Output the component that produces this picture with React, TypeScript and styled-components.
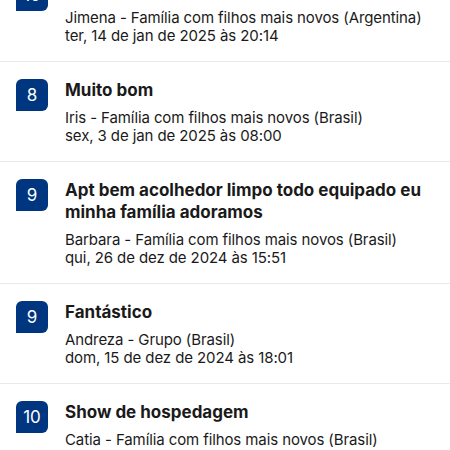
import styled, { createGlobalStyle } from 'styled-components';

const GlobalStyle = createGlobalStyle`
  html, body {
    margin: 0;
    padding: 0;
    background: #ffffff;
  }
  body {
    width: 450px;
    height: 450px;
    overflow: hidden;
    font-family: Inter, "Noto Sans", "Liberation Sans", sans-serif;
    -webkit-font-smoothing: antialiased;
  }
`;

const ReviewList = styled.ul<{ offset: number }>`
  list-style: none;
  margin: ${props => -props.offset}px 0 0;
  padding: 0;
`;

const ReviewRow = styled.li`
  display: flex;
  align-items: flex-start;
  gap: 17px;
  padding: 17px 16px 16px 16px;
  border-bottom: 1px solid #e9e9e9;
`;

const ScoreBadge = styled.div`
  flex: 0 0 32px;
  width: 32px;
  height: 32px;
  display: flex;
  align-items: center;
  justify-content: center;
  background: #003580;
  color: #ffffff;
  font-size: 17px;
  font-weight: 400;
  border-radius: 6px 6px 6px 0;
`;

const ReviewBody = styled.div`
  display: flex;
  flex-direction: column;
  gap: 8px;
  min-width: 0;
`;

const ReviewTitle = styled.h3`
  margin: 0;
  font-size: 17px;
  line-height: 22px;
  font-weight: 700;
  color: #1a1a1a;
`;

const ReviewMeta = styled.p`
  margin: 0;
  font-size: 15px;
  line-height: 18px;
  font-weight: 400;
  color: #1a1a1a;
  letter-spacing: -0.1px;
`;

type Review = {
  score: number;
  title: string;
  author: string;
  date: string;
};

const reviews: Review[] = [
  {
    score: 10,
    title: 'Excelente',
    author: 'Jimena - Família com filhos mais novos (Argentina)',
    date: 'ter, 14 de jan de 2025 às 20:14',
  },
  {
    score: 8,
    title: 'Muito bom',
    author: 'Iris - Família com filhos mais novos (Brasil)',
    date: 'sex, 3 de jan de 2025 às 08:00',
  },
  {
    score: 9,
    title: 'Apt bem acolhedor limpo todo equipado eu minha família adoramos',
    author: 'Barbara - Família com filhos mais novos (Brasil)',
    date: 'qui, 26 de dez de 2024 às 15:51',
  },
  {
    score: 9,
    title: 'Fantástico',
    author: 'Andreza - Grupo (Brasil)',
    date: 'dom, 15 de dez de 2024 às 18:01',
  },
  {
    score: 10,
    title: 'Show de hospedagem',
    author: 'Catia - Família com filhos mais novos (Brasil)',
    date: 'sáb, 7 de dez de 2024 às 10:32',
  },
];

const App = () => {
  return (
    <>
      <GlobalStyle />
      <ReviewList offset={38}>
        {reviews.map((review, i) => (
          <ReviewRow key={i}>
            <ScoreBadge>{review.score}</ScoreBadge>
            <ReviewBody>
              <ReviewTitle>{review.title}</ReviewTitle>
              <ReviewMeta>
                {review.author}
                <br />
                {review.date}
              </ReviewMeta>
            </ReviewBody>
          </ReviewRow>
        ))}
      </ReviewList>
    </>
  );
};

export default App;
